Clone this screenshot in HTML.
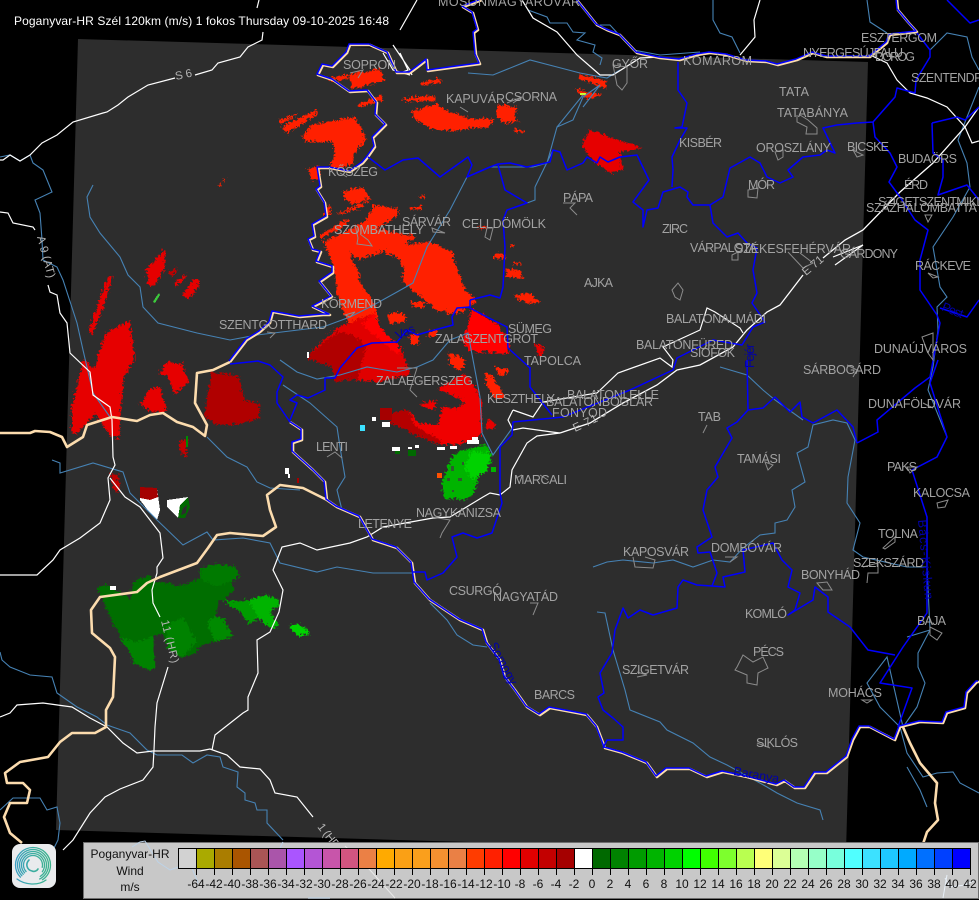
<!DOCTYPE html>
<html><head><meta charset="utf-8"><title>Poganyvar-HR Wind</title>
<style>
html,body{margin:0;padding:0;background:#000;width:979px;height:900px;overflow:hidden}
svg{display:block;position:absolute;left:0;top:0}
text{font-family:"Liberation Sans",sans-serif}
.l text{font-size:12.5px;fill:#a2a2a2}
.c text{font-size:12.5px;fill:#0000a8}
.r text{font-size:11.5px;fill:#b4b4b4}
.t text{font-size:12px;fill:#111;text-anchor:middle}
</style></head><body>
<svg width="979" height="900" viewBox="0 0 979 900" xmlns="http://www.w3.org/2000/svg">
<defs>
<filter id="rough" filterUnits="userSpaceOnUse" x="0" y="0" width="979" height="900" color-interpolation-filters="sRGB">
<feTurbulence type="turbulence" baseFrequency="0.28" numOctaves="2" seed="4" result="n"/>
<feDisplacementMap in="SourceGraphic" in2="n" scale="7" xChannelSelector="R" yChannelSelector="G"/>
</filter>
<linearGradient id="sw" gradientUnits="userSpaceOnUse" x1="14" y1="866" x2="54" y2="866">
<stop offset="0" stop-color="#3a9cc4"/><stop offset=".5" stop-color="#3cae9f"/><stop offset="1" stop-color="#3db488"/>
</linearGradient>
<path id="bA" d="M577 0L597 25 607 30 620 35 637 53 660 58 680 60 697 55 710 53 727 55 747 61 767 62 778 65 797 60 813 53 827 57 847 57 870 57 887 43 890 35 917 32 908 22 898 10 897 0"/>
<path id="bN" d="M482 0L463 7 473 13 478 30 474 33 476 55 480 64 457 67 428 71 427 60 418 67 410 73 397 73 388 53 370 45 350 45 347 53 333 67 323 65 318 75 333 80 350 92 368 91 377 103 376 115 386 125 373 138 375 147 368 157 363 163 350 172 330 168 318 168 321 187 317 190 325 203 327 217 313 225 315 237 309 240 313 250 321 252 317 262 333 267 333 273 320 282 332 297 313 307 330 315 323 315 300 317 273 312 270 323 260 332 247 340 230 362"/>
<path id="bE" d="M290 422L302 430 302 440 293 443 293 452 313 470 325 482 327 500 337 507 360 517 373 540 397 548 412 563 415 583 430 600 460 620 483 630 487 643 500 660 505 677 515 690 527 707 540 715 550 708 577 713 587 715 597 727 605 748 623 753 647 763 657 777 667 769 690 769 707 777 723 772 747 777 777 785 785 781 795 788 805 788 815 773 827 773 847 757 853 740 860 727 870 727 895 740 900 727 920 722 943 723 947 713 965 708 967 693 977 682 979 682"/>
</defs>
<rect width="979" height="900" fill="#000"/>
<polygon points="78,39 868,62 846,852 432,841 56,830" fill="#2d2d2d"/>

<!-- radar -->
<g filter="url(#rough)">
<g fill="#ff2000">
<polygon points="348,73 378,67 383,78 373,82 350,87"/>
<polygon points="325,77 348,72 348,76 330,80"/>
<polygon points="419,80 439,77 439,81 419,83"/>
<polygon points="401,97 433,93 433,99 403,100"/>
<polygon points="410,110 433,102 447,110 470,117 493,117 487,125 450,129 430,127 413,118"/>
<polygon points="495,103 515,105 513,118 518,120 503,122 495,115"/>
<polygon points="512,127 523,128 523,131 512,130"/>
<polygon points="277,119 295,111 295,114 278,122"/>
<polygon points="280,125 315,108 316,112 285,132"/>
<polygon points="300,135 310,123 353,115 365,137 352,153 350,163 328,168 333,150 330,140 305,140"/>
<polygon points="305,167 318,163 318,177 310,179"/>
<polygon points="356,102 380,93 381,99 358,105"/>
<polygon points="577,72 605,79 603,87 578,77"/>
<polygon points="573,87 600,93 587,97 578,93"/>
<polygon points="342,190 360,185 369,197 350,203 343,197"/>
<polygon points="335,212 369,198 357,207 337,213"/>
<polygon points="317,233 347,217 347,221 320,237"/>
<polygon points="320,212 328,203 330,213 322,213"/>
<polygon points="322,240 363,220 373,203 397,207 397,213 375,227 415,235 403,243 427,240 450,250 463,287 475,300 460,307 437,310 400,280 403,270 397,257 383,250 357,258 347,250 358,273 357,280 372,300 378,330 345,320 335,290 332,265"/>
<polygon points="385,313 395,310 405,315 403,320 388,322"/>
<polygon points="408,300 423,300 422,307 412,305"/>
<polygon points="435,300 460,300 463,310 447,313"/>
<polygon points="447,352 463,357 463,367 455,368 448,362"/>
<polygon points="215,184 225,176 218,184"/>
<polygon points="494,365 507,368 503,374 495,372"/>
<polygon points="482,372 490,373 503,395 493,397 487,387"/>
<polygon points="427,330 435,328 435,335 425,335"/>
<polygon points="407,332 417,332 417,343 410,342"/>
<polygon points="492,252 503,252 503,257 492,257"/>
<polygon points="513,260 519,260 519,263 513,263"/>
<polygon points="503,268 518,268 522,277 505,275"/>
<polygon points="512,293 528,292 538,301 528,302 515,298"/>
<polygon points="508,242 512,242 512,245 508,245"/>
<polygon points="477,224 485,224 485,227 477,227"/>
<polygon points="408,205 420,204 420,207 409,208"/>
<polygon points="417,194 423,194 423,196 417,196"/>
</g>
<g fill="#e60000">
<polygon points="580,143 587,128 607,135 640,146 618,150 621,167 610,172 590,158"/>
<polygon points="128,320 130,333 133,357 122,377 118,417 117,438 108,433 93,413 75,432 70,430 70,407 82,357 92,367 100,343 105,330 120,323"/>
<polygon points="107,274 111,275 100,310 90,333 87,330 95,305"/>
<polygon points="165,360 180,362 187,380 173,393 165,373 158,373"/>
<polygon points="147,388 158,385 165,410 150,410 138,403"/>
<polygon points="145,267 163,248 163,267 153,283 147,285"/>
<polygon points="172,282 185,272 182,278 173,285"/>
<polygon points="180,293 192,278 197,278 197,285 187,297"/>
<polygon points="435,388 463,372 475,388 480,400 480,433 473,437 457,443 437,443 413,433 413,423 403,427 390,422 388,412 407,408 417,422 437,423 440,405 455,407 463,400 443,390" fill="#f00000"/>
<polygon points="418,403 435,398 433,408 428,407" fill="#f00000"/>
<polygon points="487,417 495,423 490,428 483,425"/>
<polygon points="532,342 543,345 538,357"/>
<polygon points="463,333 470,307 497,323 508,343 507,352 470,350 460,342" fill="#ff0000"/>
</g>
<polygon points="307,352 337,325 350,320 372,312 380,328 400,347 408,372 380,380 343,378 333,380 330,365 308,358" fill="#e00000"/>
<polygon points="307,352 337,330 352,333 365,345 355,378 343,378 333,380 330,365 308,358" fill="#b00000"/>
<polygon points="372,312 380,328 400,347 395,352 375,335 360,322" fill="#ff0000"/>
<polygon points="388,412 407,408 413,423 440,440 437,443 413,433 403,427 390,422" fill="#b40000"/>
<polygon points="210,370 237,375 242,398 258,403 257,417 233,423 213,423 202,413" fill="#b00000"/>
<polygon points="178,440 186,436 185,455 182,455 178,448" fill="#c30000"/>
<polygon points="109,472 117,473 118,490 112,490" fill="#c00000"/>
<polygon points="167,272 175,265 175,270 170,275" fill="#c00000"/>
<polygon points="95,585 107,583 128,597 132,580 148,573 152,580 170,582 175,585 198,577 198,568 213,562 233,565 238,575 230,580 232,588 223,598 217,600 213,615 222,617 232,635 213,640 200,642 193,652 180,655 167,647 160,630 152,635 153,667 147,668 133,662 127,650 108,615 102,600" fill="#006e00"/>
<polygon points="127,650 118,635 135,640 152,635 153,667 147,668 133,662" fill="#008200"/>
<polygon points="163,625 180,615 195,640 180,655 167,647" fill="#008200"/>
<polygon points="213,615 222,617 232,635 213,640 205,620" fill="#008a00"/>
<polygon points="198,577 198,568 213,562 233,565 238,575 230,580 215,585" fill="#007a00"/>
<polygon points="220,598 233,600 247,598 263,593 277,598 278,603 268,610 277,622 273,627 267,623 257,618 248,622 237,610" fill="#009b00"/>
<polygon points="247,598 263,593 277,598 278,603 268,610 277,622 273,627 257,618" fill="#00b400"/>
<polygon points="287,625 295,622 305,627 307,632 297,635 290,630" fill="#00d200"/>
<polygon points="447,463 452,453 460,448 485,443 490,460 477,473 473,490 463,498 443,497 440,482" fill="#00b400"/>
<polygon points="470,450 490,452 485,470 470,478 462,465" fill="#00d200"/>
</g>
<g shape-rendering="crispEdges">
<rect x="186" y="436" width="2" height="11" fill="#008a00"/>
<polygon points="140,487 157,488 160,510 157,520 150,513 140,500" fill="#fff"/>
<polygon points="140,487 157,488 158,497 150,500 140,498" fill="#a50000"/>
<polygon points="167,500 188,497 190,507 185,518 178,518 167,507" fill="#fff"/>
<polygon points="180,505 188,497 190,507 185,518 178,518" fill="#006900"/>
<polygon points="183,508 187,505 186,513 181,515" fill="#2d2d2d"/>
<g fill="#2d5a2d">
<rect x="451" y="466" width="3" height="5"/><rect x="458" y="478" width="4" height="3"/><rect x="447" y="478" width="3" height="3"/><rect x="462" y="462" width="2" height="3"/><rect x="452" y="490" width="2" height="2"/>
</g>
<rect x="491" y="467" width="5" height="5" fill="#00b400"/>
<rect x="380" y="408" width="12" height="12" fill="#a50000"/>
<g fill="#fff">
<rect x="372" y="417" width="4" height="4"/><rect x="382" y="422" width="8" height="5"/><rect x="392" y="447" width="8" height="4"/><rect x="408" y="447" width="4" height="2"/><rect x="415" y="445" width="4" height="3"/><rect x="437" y="447" width="8" height="3"/><rect x="450" y="446" width="7" height="3"/><rect x="285" y="468" width="4" height="6"/><rect x="288" y="474" width="2" height="4"/><rect x="110" y="586" width="6" height="4"/><rect x="467" y="440" width="12" height="4"/><rect x="472" y="437" width="6" height="3"/><rect x="307" y="352" width="2" height="6"/>
</g>
<rect x="360" y="425" width="5" height="6" fill="#3ce1ff"/>
<rect x="408" y="450" width="8" height="6" fill="#006900"/>
<rect x="395" y="451" width="5" height="3" fill="#006900"/>
<rect x="297" y="478" width="2" height="5" fill="#a50000"/>
<rect x="437" y="473" width="5" height="5" fill="#ff5000"/>
<polygon points="153,302 156,297 159,293 160,295 155,303" fill="#3cc83c"/>
<rect x="580" y="93" width="6" height="2" fill="#c8ff30"/>
</g>

<!-- rivers -->
<g fill="none" stroke="#4682b4" stroke-width="1.1">
<path d="M93 185L87 197 90 217 100 233 120 257 128 275 140 287 143 307 158 323 197 333 230 340 257 335 323 327 350 317 370 307 397 292 413 283 427 247 450 210 467 177 490 167 533 167 547 163 557 127 583 95"/>
<path d="M535 187L535 200 527 203M553 150L535 187M557 127L573 120 583 97 600 85"/>
<path d="M468 73L493 75 530 60 557 67 580 73 607 78 620 70"/>
<path d="M0 157L10 155 20 161 30 155 33 163 43 170 52 192 35 200 40 213 42 240 43 260 57 267 63 280 77 323 83 350 93 393 110 417"/>
<path d="M280 360L297 372 317 379 340 375 367 367 397 372 417 367 433 360 450 340 468 333 480 397 482 433 493 455 513 427"/>
<path d="M283 385L310 403 337 427 340 447 345 477 337 490 342 510"/>
<path d="M207 437L227 457 247 467 257 482 270 488 300 490"/>
<path d="M52 460L60 463 60 473 93 463 123 472 130 493 157 520 183 545 207 532 213 540 243 538 270 543 280 563 317 572 337 567 373 573 413 573"/>
<path d="M0 652L2 660 10 667 30 675 52 677 57 693 77 707 97 717 107 725 130 733 147 750 157 755 182 755 193 763 207 755 220 757 223 767 238 772 237 787 245 793 245 800 255 803 257 810 267 810 267 823 283 840"/>
<path d="M0 810L13 798 40 798 47 810 57 807 60 823 58 840 53 850"/>
<path d="M430 603L447 620 457 635 473 645 487 647"/>
<path d="M597 612L605 613 613 650 625 690 630 710 660 722 667 730 693 743 710 757 727 765 767 787 777 793 797 803 820 810 823 820"/>
<path d="M593 567L607 562 623 560 653 563 673 560 693 567 713 560 730 562 743 548 760 535 775 533 775 523 787 520 795 507 792 490 805 482 797 453 808 447 813 425 833 420 847 423 855 440 848 477 847 503 860 523 853 550 863 557 907 567 927 567 930 630 907 637"/>
<path d="M720 367L747 375 763 390 775 400 803 420"/>
<path d="M930 50L947 33 967 37 972 57 979 70M979 87L967 117 958 140 967 163 970 187 953 217 933 247 940 287 947 297 937 307 938 330 933 367 928 390 947 437 937 457 912 470"/>
<path d="M930 630L918 653 918 667 925 683 917 707 903 727 887 657 867 683 880 707 900 727 907 753 923 777 937 773 953 772 960 783 979 793M907 767L920 790 927 807"/>
<path d="M713 0L713 20 720 33 732 37 740 53"/>
<path d="M867 0L870 22 887 33"/>
<path d="M600 25L610 25 633 50 660 55 700 52"/>
<path d="M528 10L547 17 550 23 567 23 573 32 585 33 577 40 595 45 593 52 602 58 600 65"/>
<path d="M600 85L583 107"/>
</g>

<!-- roads -->
<g fill="none" stroke="#fff" stroke-width="1.2">
<path d="M259 0L257 8M263 32L262 40 248 47 240 57 218 63 212 70 195 75M175 78L148 85 128 97 118 105 107 112 103 113 73 122 57 135 42 143 30 155 20 161 10 155 3 160 0 160"/>
<path d="M0 212L8 213 13 223 33 227 35 230M48 285L50 292 57 295 60 313 67 323 70 353 90 372 93 395 110 407 112 420 113 457 115 465 108 478 110 500 100 523 80 538 60 550 53 560 37 575 0 575"/>
<path d="M110 478L125 497 140 507 160 533 163 558 157 567 157 573 152 590 153 603 160 617M168 667L157 703 155 727 154 750 153 767 143 780 120 789 105 797 90 813 73 840 63 850"/>
<path d="M0 717L10 713 17 705 43 703 72 707 90 718 107 727 123 743 137 753 153 751 200 751 210 749 227 755 240 767 260 769 270 780 275 793 297 797 313 817"/>
<path d="M212 750L215 735 243 713 248 710 248 697 258 673 257 640 270 632 279 612 283 590 273 570 282 547 300 543 317 550 350 543 367 537 383 527 433 518 450 517 483 497 490 493 500 495 510 487 512 470 527 443 537 436 560 433"/>
<path d="M560 433L590 423 623 403 657 385 677 370 700 365 733 347 747 330 767 312 780 305 803 275M823 258L845 240 863 230 900 192 933 163 965 127 979 107" stroke-width="1.3"/>
<path d="M513 410L508 420 513 430 523 428 552 432 560 433M513 410L533 417 543 402 597 393 618 373 660 358 672 367 673 360 663 347 700 330 707 308 715 312 740 328 743 333"/>
<path d="M833 257L863 245 835 265"/>
<path d="M760 0L754 20 755 37 740 55"/>
<path d="M870 55L887 63 897 80 910 93 927 98 947 107 965 127 972 143 979 141"/>
<path d="M522 0L533 18 557 32 577 55 600 75 613 75 640 58 660 57"/>
<path d="M417 0L400 30"/>
<path d="M400 53L408 70 400 73M393 45L410 70 412 75M383 53L393 70 410 75"/>
</g>

<!-- national border -->
<g fill="none" stroke-linejoin="round">
<g stroke="#fcdcae" stroke-width="2.6">
<use href="#bA"/><use href="#bN"/><use href="#bE"/>
<path d="M230 362L213 370 197 373 195 403 207 425 205 436 193 427 177 422 163 413 150 415 137 421 112 417 87 425 83 437 67 447 62 437 50 432 35 431 30 433 0 433"/>
<path d="M327 500L303 488 280 485 267 495 270 510 276 527 263 536 230 533 217 535 208 548 197 563 160 577 147 583 137 592 100 597 91 610 92 633 110 648 115 657 113 697 106 710 106 727 95 733 72 733 60 742 48 757 20 762 5 773 7 783 23 783 30 790 27 803 10 803 4 817 10 833 22 843"/>
<path d="M903 727L910 743 920 763 937 783 935 803 938 820 927 832 922 847"/>
</g>
<g stroke="#0000ff" stroke-width="1.5">
<use href="#bA" transform="translate(-1,-1)"/><use href="#bN" transform="translate(-1,-1)"/><use href="#bE" transform="translate(-1,-1)"/>
</g>
</g>

<!-- counties -->
<g fill="none" stroke="#0000ff" stroke-width="1.5" stroke-linejoin="round">
<path d="M368 157L385 170 403 160 418 158 440 177 468 157 472 165 467 177 490 167 498 164 510 163 527 167 550 162 553 150 560 152 567 170 583 163 587 157 597 163 600 157 608 162 620 157 637 155 649 180 633 202 643 210 643 227 647 210 658 208 663 192 680 187 688 192 687 197 693 205 710 205 723 197 730 168 750 157 760 163 767 177 780 183 793 177 788 170 803 157 820 155 827 150 835 153 823 128 837 125 857 123 873 122 895 97 897 88 915 93 916 80 930 57 930 50 917 33"/>
<path d="M873 122L875 137 890 153 897 167 889 182 900 197 915 220 928 230 920 260 920 290 937 315 940 323 930 377 915 388 877 420 878 432 857 443"/>
<path d="M938 360L930 383 947 437 937 457 912 470 927 517 927 577 927 613 903 647 880 683 912 688 903 713 898 727"/>
<path d="M940 308L967 317 979 300M932 123L957 117 965 120 979 107M932 123L933 153 943 160 943 177 938 195 967 185 979 200M947 0L960 13 970 23 979 20"/>
<path d="M678 62L678 90 687 103 682 127 675 128 687 128 680 140 672 157 673 170 672 187"/>
<path d="M710 205L713 223 727 237 738 233 747 243 757 248 753 270 757 293 752 303 765 322 753 327 742 345 713 340 677 358 673 370 630 390 563 417 513 422 512 435 500 447 500 493 502 503 492 533 477 538 463 533 452 537 457 557 443 573 427 580 425 572 413 572"/>
<path d="M530 367L530 387 552 415M470 300L490 295 500 298 503 287 505 247 503 220 507 210 527 203 505 190 498 165"/>
<path d="M470 300L470 307 457 308 452 317 453 325 427 332 417 335 407 330 397 342 372 343 357 348 340 368 335 378 325 378 325 390 308 398 297 395 290 400 297 403 290 420"/>
<path d="M468 307L487 317 507 327 508 348 530 368"/>
<path d="M230 364L258 361 270 365 283 377 277 392 277 403 290 422"/>
<path d="M747 360L748 410 763 408 775 397 790 412 800 402 802 417 813 423 837 410 853 427 857 443M748 410L737 422 727 428 732 438 715 467 718 477 707 490 703 510 712 537 697 547 698 553 710 552 717 573 712 586 697 585 683 580 678 587 677 608 653 615 640 610 628 618 623 608 615 630 612 653 600 673 604 693 598 697 603 710 613 718 623 727 623 740 607 740 603 748"/>
<path d="M712 586L725 587 723 577 745 572 743 550 773 543 782 560 792 570 788 587 800 593 795 610 788 615 813 600 815 587 828 597 828 612 850 627 868 650 895 655"/>
</g>

<!-- city outlines -->
<g fill="none" stroke="#8c8c8c" stroke-width="1">
<path d="M797 115L797 122 807 127 806 134 817 134 817 128 808 120 800 115"/>
<path d="M788 252L803 268 813 263 800 253"/>
<path d="M743 655L737 667 735 670 747 675 747 683 757 685 758 673 768 668 763 657 753 662Z"/>
<path d="M355 225L358 238 357 244 372 246 368 240 360 234"/>
<path d="M633 557L635 567 653 568 655 560 645 557M817 583L827 582 832 590 823 590ZM863 567L878 563 878 573 868 573 867 583M883 548L895 537 895 542 885 549ZM930 627L942 633 937 640 930 635ZM862 700L872 700 867 703ZM757 743L770 748M937 503L948 500 945 507 938 508ZM907 467L917 467 910 473ZM923 403L933 408M847 365L857 370 853 377M765 462L773 465 768 470ZM530 603L538 603 533 615M637 672L647 675 637 677M725 557L737 557 730 562"/>
<path d="M775 152L783 150 783 157 778 160ZM853 150L863 155 857 157ZM748 190L758 188 757 198 748 197ZM732 255L738 252 738 260 732 260ZM672 290L678 283 683 290 680 300 675 297ZM925 215L932 215 928 222ZM922 337L933 333 933 360 928 353ZM928 273L938 277 933 278Z"/>
<path d="M613 65L627 67 627 83 622 90 617 85ZM432 228L445 233 433 232ZM487 228L493 228 490 240 485 237ZM563 203L575 203 570 208 577 215M397 368L417 368 410 390 417 397M432 517L450 520 442 533 440 538M327 457L335 452 342 458M460 107L468 112M507 103L522 97 513 103M340 173L347 177M345 315L355 312 350 317ZM267 332L275 333 270 338M350 73L363 70 358 78M516 478L522 475M540 475L548 480M707 425L703 433"/>
</g>

<!-- labels -->
<g class="l">
<text x="438" y="6" textLength="142">MOSONMAGYARÓVÁR</text>
<text x="343" y="69" textLength="53">SOPRON</text>
<text x="446" y="103" textLength="59">KAPUVÁR</text>
<text x="505" y="101" textLength="52">CSORNA</text>
<text x="328" y="176" textLength="50">KŐSZEG</text>
<text x="402" y="226" textLength="49">SÁRVÁR</text>
<text x="462" y="228" textLength="84">CELLDÖMÖLK</text>
<text x="334" y="234" textLength="90">SZOMBATHELY</text>
<text x="563" y="202" textLength="30">PÁPA</text>
<text x="584" y="287" textLength="29">AJKA</text>
<text x="321" y="308" textLength="61">KÖRMEND</text>
<text x="219" y="329" textLength="108">SZENTGOTTHARD</text>
<text x="508" y="333" textLength="44">SÜMEG</text>
<text x="435" y="343" textLength="103">ZALASZENTGRÓT</text>
<text x="524" y="365" textLength="57">TAPOLCA</text>
<text x="376" y="385" textLength="97">ZALAEGERSZEG</text>
<text x="487" y="403" textLength="68">KESZTHELY</text>
<text x="567" y="399" textLength="92">BALATONLELLE</text>
<text x="546" y="406" textLength="107">BALATONBOGLÁR</text>
<text x="552" y="417" textLength="55">FONYÓD</text>
<text x="316" y="451" textLength="32">LENTI</text>
<text x="514" y="484" textLength="53">MARCALI</text>
<text x="416" y="517" textLength="85">NAGYKANIZSA</text>
<text x="358" y="528" textLength="54">LETENYE</text>
<text x="449" y="595" textLength="53">CSURGÓ</text>
<text x="493" y="601" textLength="65">NAGYATÁD</text>
<text x="623" y="556" textLength="66">KAPOSVÁR</text>
<text x="711" y="552" textLength="71">DOMBÓVÁR</text>
<text x="698" y="421" textLength="23">TAB</text>
<text x="737" y="463" textLength="44">TAMÁSI</text>
<text x="803" y="374" textLength="78">SÁRBOGÁRD</text>
<text x="868" y="408" textLength="93">DUNAFÖLDVÁR</text>
<text x="887" y="471" textLength="30">PAKS</text>
<text x="913" y="497" textLength="57">KALOCSA</text>
<text x="878" y="538" textLength="40">TOLNA</text>
<text x="853" y="567" textLength="71">SZEKSZÁRD</text>
<text x="801" y="579" textLength="59">BONYHÁD</text>
<text x="745" y="618" textLength="42">KOMLÓ</text>
<text x="917" y="625" textLength="29">BAJA</text>
<text x="753" y="656" textLength="31">PÉCS</text>
<text x="622" y="674" textLength="67">SZIGETVÁR</text>
<text x="828" y="697" textLength="54">MOHÁCS</text>
<text x="534" y="699" textLength="41">BARCS</text>
<text x="756" y="747" textLength="42">SIKLÓS</text>
<text x="861" y="42" textLength="76">ESZTERGOM</text>
<text x="803" y="57" textLength="100">NYERGESÚJFALU</text>
<text x="875" y="61" textLength="40">DOROG</text>
<text x="911" y="82" textLength="80">SZENTENDRE</text>
<text x="612" y="68" textLength="36">GYŐR</text>
<text x="683" y="65" textLength="69">KOMÁROM</text>
<text x="779" y="96" textLength="30">TATA</text>
<text x="777" y="117" textLength="71">TATABÁNYA</text>
<text x="679" y="147" textLength="43">KISBÉR</text>
<text x="756" y="152" textLength="75">OROSZLÁNY</text>
<text x="847" y="151" textLength="42">BICSKE</text>
<text x="898" y="163" textLength="59">BUDAÖRS</text>
<text x="748" y="189" textLength="27">MÓR</text>
<text x="904" y="189" textLength="24">ÉRD</text>
<text x="878" y="206" textLength="122">SZIGETSZENTMIKLÓS</text>
<text x="866" y="212" textLength="111">SZÁZHALOMBATTA</text>
<text x="662" y="233" textLength="26">ZIRC</text>
<text x="690" y="252" textLength="67">VÁRPALOTA</text>
<text x="735" y="253" textLength="116">SZÉKESFEHÉRVÁR</text>
<text x="840" y="258" textLength="58">GÁRDONY</text>
<text x="915" y="270" textLength="56">RÁCKEVE</text>
<text x="666" y="323" textLength="100">BALATONALMÁDI</text>
<text x="636" y="349" textLength="97">BALATONFÜRED</text>
<text x="690" y="357" textLength="45">SIÓFOK</text>
<text x="874" y="353" textLength="93">DUNAÚJVÁROS</text>
</g>

<!-- road labels -->
<g class="r">
<text x="176" y="80" textLength="17" transform="rotate(-12 176 80)">S 6</text>
<text transform="translate(37,237) rotate(75)" textLength="43">A 9 (AT)</text>
<text transform="translate(161,621) rotate(76)" textLength="44">11 (HR)</text>
<text transform="translate(317,827) rotate(52)" textLength="32">1 (HR)</text>
<text transform="translate(806,276) rotate(-40)" textLength="24">E 71</text>
<text transform="translate(575,432) rotate(-25)" textLength="26">E 71</text>
</g>
<g class="c">
<text transform="translate(489,645) rotate(62)" textLength="46">Somogy</text>
<text transform="translate(733,775) rotate(10)" textLength="46">Baranya</text>
<text transform="translate(918,520) rotate(85)" textLength="80">Bács-Kiskun</text>
<text transform="translate(754,368) rotate(-90)" textLength="24">Fejér</text>
<text transform="translate(941,310) rotate(22)" textLength="22">Pest</text>
<text transform="translate(398,340) rotate(-25)" textLength="20">Vas</text>
</g>

<text x="14" y="25" font-size="12" fill="#fff" textLength="375">Poganyvar-HR Szél 120km (m/s) 1 fokos Thursday 09-10-2025 16:48</text>

<!-- legend -->
<rect x="83.5" y="842.5" width="895" height="56" fill="#c8c8c8" stroke="#6e6e6e"/>
<g fill="none" stroke-width="1">
<path d="M132 847L140 842 145 841 158 862 170 870 190 863 198 883" stroke="#bdd3e8"/>
<path d="M345 846L370 870 395 898" stroke="#e8e8e8"/>
<path d="M272 860L280 848 283 842M308 898L330 898" stroke="#bdd3e8"/>
<path d="M945 878L950 887 965 885 975 880M947 875L943 898" stroke="#e8f0f8"/>
</g>
<g stroke="#000" stroke-width="1">
<rect x="178.5" y="848.5" width="18" height="20" fill="#d2d2d2"/>
<rect x="196.5" y="848.5" width="18" height="20" fill="#aaaa00"/>
<rect x="214.5" y="848.5" width="18" height="20" fill="#aa7d00"/>
<rect x="232.5" y="848.5" width="18" height="20" fill="#aa5500"/>
<rect x="250.5" y="848.5" width="18" height="20" fill="#aa5555"/>
<rect x="268.5" y="848.5" width="18" height="20" fill="#aa55aa"/>
<rect x="286.5" y="848.5" width="18" height="20" fill="#aa55ff"/>
<rect x="304.5" y="848.5" width="18" height="20" fill="#b455d5"/>
<rect x="322.5" y="848.5" width="18" height="20" fill="#c855aa"/>
<rect x="340.5" y="848.5" width="18" height="20" fill="#d25580"/>
<rect x="358.5" y="848.5" width="18" height="20" fill="#eb8045"/>
<rect x="376.5" y="848.5" width="18" height="20" fill="#ffaa00"/>
<rect x="394.5" y="848.5" width="18" height="20" fill="#faa015"/>
<rect x="412.5" y="848.5" width="18" height="20" fill="#fa9f1c"/>
<rect x="430.5" y="848.5" width="18" height="20" fill="#f59030"/>
<rect x="448.5" y="848.5" width="18" height="20" fill="#ea8045"/>
<rect x="466.5" y="848.5" width="18" height="20" fill="#ff3c00"/>
<rect x="484.5" y="848.5" width="18" height="20" fill="#ff2000"/>
<rect x="502.5" y="848.5" width="18" height="20" fill="#ff0000"/>
<rect x="520.5" y="848.5" width="18" height="20" fill="#e10000"/>
<rect x="538.5" y="848.5" width="18" height="20" fill="#c30000"/>
<rect x="556.5" y="848.5" width="18" height="20" fill="#a50000"/>
<rect x="574.5" y="848.5" width="18" height="20" fill="#ffffff"/>
<rect x="592.5" y="848.5" width="18" height="20" fill="#006900"/>
<rect x="610.5" y="848.5" width="18" height="20" fill="#008200"/>
<rect x="628.5" y="848.5" width="18" height="20" fill="#009b00"/>
<rect x="646.5" y="848.5" width="18" height="20" fill="#00b400"/>
<rect x="664.5" y="848.5" width="18" height="20" fill="#00d200"/>
<rect x="682.5" y="848.5" width="18" height="20" fill="#00ff00"/>
<rect x="700.5" y="848.5" width="18" height="20" fill="#40ff00"/>
<rect x="718.5" y="848.5" width="18" height="20" fill="#7dff2d"/>
<rect x="736.5" y="848.5" width="18" height="20" fill="#b9ff50"/>
<rect x="754.5" y="848.5" width="18" height="20" fill="#ffff78"/>
<rect x="772.5" y="848.5" width="18" height="20" fill="#dcff96"/>
<rect x="790.5" y="848.5" width="18" height="20" fill="#b4ffb4"/>
<rect x="808.5" y="848.5" width="18" height="20" fill="#96ffc8"/>
<rect x="826.5" y="848.5" width="18" height="20" fill="#78ffdc"/>
<rect x="844.5" y="848.5" width="18" height="20" fill="#50ffff"/>
<rect x="862.5" y="848.5" width="18" height="20" fill="#3ce1ff"/>
<rect x="880.5" y="848.5" width="18" height="20" fill="#1ec8ff"/>
<rect x="898.5" y="848.5" width="18" height="20" fill="#00aaff"/>
<rect x="916.5" y="848.5" width="18" height="20" fill="#0070ff"/>
<rect x="934.5" y="848.5" width="18" height="20" fill="#0040ff"/>
<rect x="952.5" y="848.5" width="18" height="20" fill="#0000ff"/>
<path d="M196.5 868V875M214.5 868V875M232.5 868V875M250.5 868V875M268.5 868V875M286.5 868V875M304.5 868V875M322.5 868V875M340.5 868V875M358.5 868V875M376.5 868V875M394.5 868V875M412.5 868V875M430.5 868V875M448.5 868V875M466.5 868V875M484.5 868V875M502.5 868V875M520.5 868V875M538.5 868V875M556.5 868V875M574.5 868V875M592.5 868V875M610.5 868V875M628.5 868V875M646.5 868V875M664.5 868V875M682.5 868V875M700.5 868V875M718.5 868V875M736.5 868V875M754.5 868V875M772.5 868V875M790.5 868V875M808.5 868V875M826.5 868V875M844.5 868V875M862.5 868V875M880.5 868V875M898.5 868V875M916.5 868V875M934.5 868V875M952.5 868V875M970.5 868V875" fill="none"/>
</g>
<g class="t">
<text x="130" y="858" textLength="79">Poganyvar-HR</text>
<text x="130" y="875">Wind</text>
<text x="130" y="891">m/s</text>
<text x="196" y="888">-64</text><text x="214" y="888">-42</text><text x="232" y="888">-40</text><text x="250" y="888">-38</text><text x="268" y="888">-36</text><text x="286" y="888">-34</text><text x="304" y="888">-32</text><text x="322" y="888">-30</text><text x="340" y="888">-28</text><text x="358" y="888">-26</text><text x="376" y="888">-24</text><text x="394" y="888">-22</text><text x="412" y="888">-20</text><text x="430" y="888">-18</text><text x="448" y="888">-16</text><text x="466" y="888">-14</text><text x="484" y="888">-12</text><text x="502" y="888">-10</text><text x="520" y="888">-8</text><text x="538" y="888">-6</text><text x="556" y="888">-4</text><text x="574" y="888">-2</text><text x="592" y="888">0</text><text x="610" y="888">2</text><text x="628" y="888">4</text><text x="646" y="888">6</text><text x="664" y="888">8</text><text x="682" y="888">10</text><text x="700" y="888">12</text><text x="718" y="888">14</text><text x="736" y="888">16</text><text x="754" y="888">18</text><text x="772" y="888">20</text><text x="790" y="888">22</text><text x="808" y="888">24</text><text x="826" y="888">26</text><text x="844" y="888">28</text><text x="862" y="888">30</text><text x="880" y="888">32</text><text x="898" y="888">34</text><text x="916" y="888">36</text><text x="934" y="888">38</text><text x="952" y="888">40</text><text x="970" y="888">42</text>
</g>

<!-- logo -->
<rect x="12" y="844" width="44" height="44" rx="8" fill="#e9ebed"/>
<g fill="none" stroke="url(#sw)" stroke-width="1.3" stroke-linecap="round">
<circle cx="33" cy="865" r="17.5" pathLength="100" stroke-dasharray="78 22" stroke-dashoffset="-38"/>
<circle cx="33" cy="865" r="15.5" pathLength="100" stroke-dasharray="80 20" stroke-dashoffset="-38"/>
<circle cx="33" cy="865" r="13.5" pathLength="100" stroke-dasharray="78 22" stroke-dashoffset="-38"/>
<circle cx="33" cy="865" r="11.5" pathLength="100" stroke-dasharray="72 28" stroke-dashoffset="-38"/>
<circle cx="33" cy="865" r="9.5" pathLength="100" stroke-dasharray="66 34" stroke-dashoffset="-38"/>
<path d="M17 879C25 885 38 886 46 880"/>
<path d="M29 860C25 864 27 870 32 871 34 872 37 871 38 869" stroke-width="1.6"/>
</g>
</svg>
</body></html>
